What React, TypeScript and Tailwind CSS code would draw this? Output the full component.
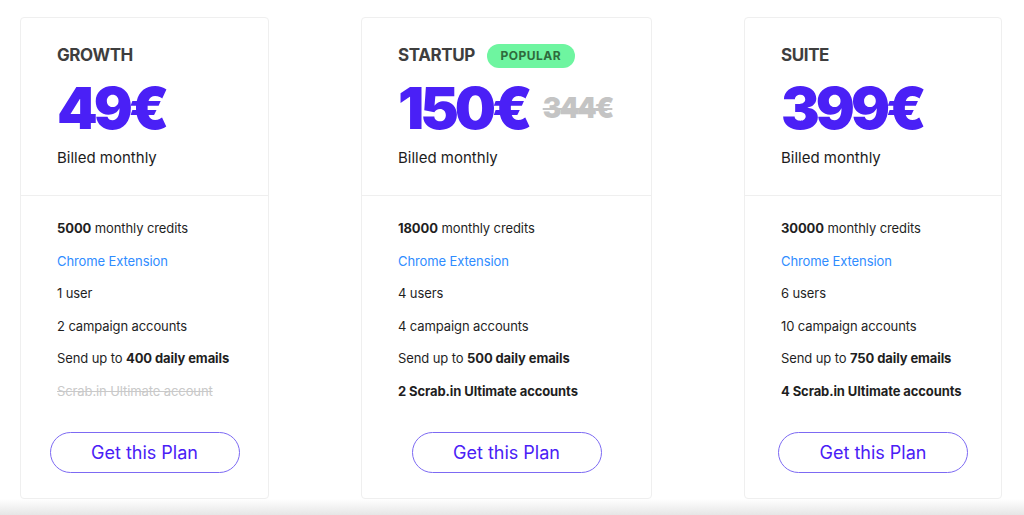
import type { ReactNode } from 'react'

type Plan = {
  name: string
  price: string
  oldPrice?: string
  popular?: boolean
  width: string
  features: ReactNode[]
}

const PLANS: Plan[] = [
  {
    name: 'GROWTH',
    price: '49€',
    width: 'w-[249px]',
    features: [
      <>
        <b className="font-bold">5000</b> monthly credits
      </>,
      <span className="text-[#2f8cff]">Chrome Extension</span>,
      <>1 user</>,
      <>2 campaign accounts</>,
      <>
        Send up to <b className="font-bold">400 daily emails</b>
      </>,
      <span className="text-[#c9c9c9] line-through">Scrab.in Ultimate account</span>,
    ],
  },
  {
    name: 'STARTUP',
    price: '150€',
    oldPrice: '344€',
    popular: true,
    width: 'w-[291px]',
    features: [
      <>
        <b className="font-bold">18000</b> monthly credits
      </>,
      <span className="text-[#2f8cff]">Chrome Extension</span>,
      <>4 users</>,
      <>4 campaign accounts</>,
      <>
        Send up to <b className="font-bold">500 daily emails</b>
      </>,
      <b className="font-bold">2 Scrab.in Ultimate accounts</b>,
    ],
  },
  {
    name: 'SUITE',
    price: '399€',
    width: 'w-[258px]',
    features: [
      <>
        <b className="font-bold">30000</b> monthly credits
      </>,
      <span className="text-[#2f8cff]">Chrome Extension</span>,
      <>6 users</>,
      <>10 campaign accounts</>,
      <>
        Send up to <b className="font-bold">750 daily emails</b>
      </>,
      <b className="font-bold">4 Scrab.in Ultimate accounts</b>,
    ],
  },
]

function PlanCard({ plan }: { plan: Plan }) {
  return (
    <div
      className={`${plan.width} flex h-[482px] flex-col rounded-[4px] border border-[#efefef] bg-white`}
    >
      <div className="h-[178px] shrink-0 border-b border-[#efefef] px-[36px] pt-[26px]">
        <div className="flex h-[24px] items-center gap-[12px]">
          <span className="text-[17px] font-bold tracking-[-0.4px] text-[#3e3e3e]">
            {plan.name}
          </span>
          {plan.popular && (
            <span className="flex h-[24px] w-[88px] items-center justify-center rounded-full bg-[#6ef5a0] text-[12px] font-bold tracking-[0.5px] text-[#2f6a3c]">
              POPULAR
            </span>
          )}
        </div>
        <div className="mt-[10px] flex h-[60px] items-center gap-[14px]">
          <span className="text-[58px] font-black leading-none tracking-[-4px] text-[#4a20f6]">
            {plan.price}
          </span>
          {plan.oldPrice && (
            <span className="text-[28px] font-black leading-none tracking-[-2px] text-[#c4c4c4] line-through">
              {plan.oldPrice}
            </span>
          )}
        </div>
        <div className="mt-[8px] text-[15px] leading-[24px] text-[#1c1c1c]">
          Billed monthly
        </div>
      </div>
      <ul className="whitespace-nowrap px-[36px] pt-[16px] text-[13px] tracking-[-0.1px] text-[#1f1f1f]">
        {plan.features.map((feature, index) => (
          <li className="leading-[32.6px]" key={index}>
            {feature}
          </li>
        ))}
      </ul>
      <div className="mt-[24px] flex justify-center">
        <button
          className="h-[41px] w-[190px] rounded-full border-[1.5px] border-[#7d6af3] text-[18px] text-[#4a20f6]"
          type="button"
        >
          Get this Plan
        </button>
      </div>
    </div>
  )
}

export default function App() {
  return (
    <div className="relative h-[515px] w-[1024px] overflow-hidden bg-white font-['Inter',sans-serif]">
      <div className="flex gap-[92px] pl-[20px] pt-[17px]">
        {PLANS.map((plan) => (
          <PlanCard key={plan.name} plan={plan} />
        ))}
      </div>
      <div className="h-[16px] bg-gradient-to-b from-white to-[#e6e6e6]" />
    </div>
  )
}
